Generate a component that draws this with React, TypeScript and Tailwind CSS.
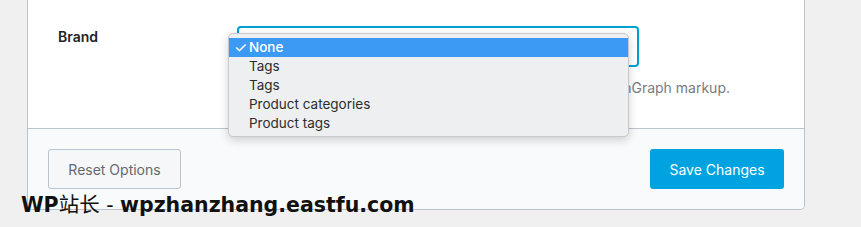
import React from "react";

const items = ["Tags", "Tags", "Product categories", "Product tags"];

export default function App() {
  return (
    <div
      className="relative w-[861px] h-[227px] overflow-hidden bg-[#f0f0f1]"
      style={{ fontFamily: "Inter, 'Liberation Sans', sans-serif" }}
    >
      <div className="ml-[27px] w-[778px] border-x border-b border-[#b9c4cf] rounded-b-[5px] overflow-hidden">
        <div className="bg-white h-[129px] border-b border-[#b9c4cf] pl-[30px] pt-[26px]">
          <div className="flex">
            <div className="w-[179px] pt-[2px] text-[14px] font-semibold text-[#1d2327] leading-[18px]">
              Brand
            </div>
            <div className="flex flex-col">
              <div className="w-[402px] h-[41px] rounded-[4px] border-2 border-[#00a0d2] bg-white" />
              <p className="mt-[13px] w-[493px] overflow-hidden text-right text-[14px] leading-[16px] text-[#787c82] whitespace-nowrap">
                Select the taxonomy to use as brand in OpenGraph markup.
              </p>
            </div>
          </div>
        </div>
        <div className="bg-[#f9fafb] h-[80px] flex items-center justify-between px-[20px]">
          <button className="w-[133px] h-[40px] rounded-[3px] border border-[#b9c4cf] bg-[#f6f7f8] text-[14px] text-[#646970]">
            Reset Options
          </button>
          <button className="w-[134px] h-[40px] rounded-[3px] bg-[#00a3e0] text-[14px] text-white">
            Save Changes
          </button>
        </div>
      </div>

      <div className="absolute left-[228px] top-[33px] w-[401px] h-[104px] rounded-[5px] border border-[#c9c9cb] bg-[#eeeff0] py-[4px] shadow-[0_3px_10px_rgba(0,0,0,0.18)]">
        <div className="flex items-center h-[19px] bg-[#3d9af4] text-white text-[13.5px]">
          <span className="w-[20px] pl-[5px] text-[15px] leading-[19px]">✓</span>
          <span className="font-medium">None</span>
        </div>
        {items.map((t, i) => (
          <div key={i} className="flex items-center h-[19px] text-[13.5px] text-[#2c2c2e]">
            <span className="w-[20px]" />
            <span>{t}</span>
          </div>
        ))}
      </div>

      <div
        className="absolute left-[21px] top-[192px] text-[20.5px] leading-[26px] text-[#111] whitespace-nowrap"
        style={{ fontFamily: "'DejaVu Sans', 'Noto Sans CJK SC', sans-serif" }}
      >
        <span className="font-bold">WP</span>
        <span className="font-normal">站长 - </span>
        <span className="font-bold">wpzhanzhang.eastfu.com</span>
      </div>
    </div>
  );
}
